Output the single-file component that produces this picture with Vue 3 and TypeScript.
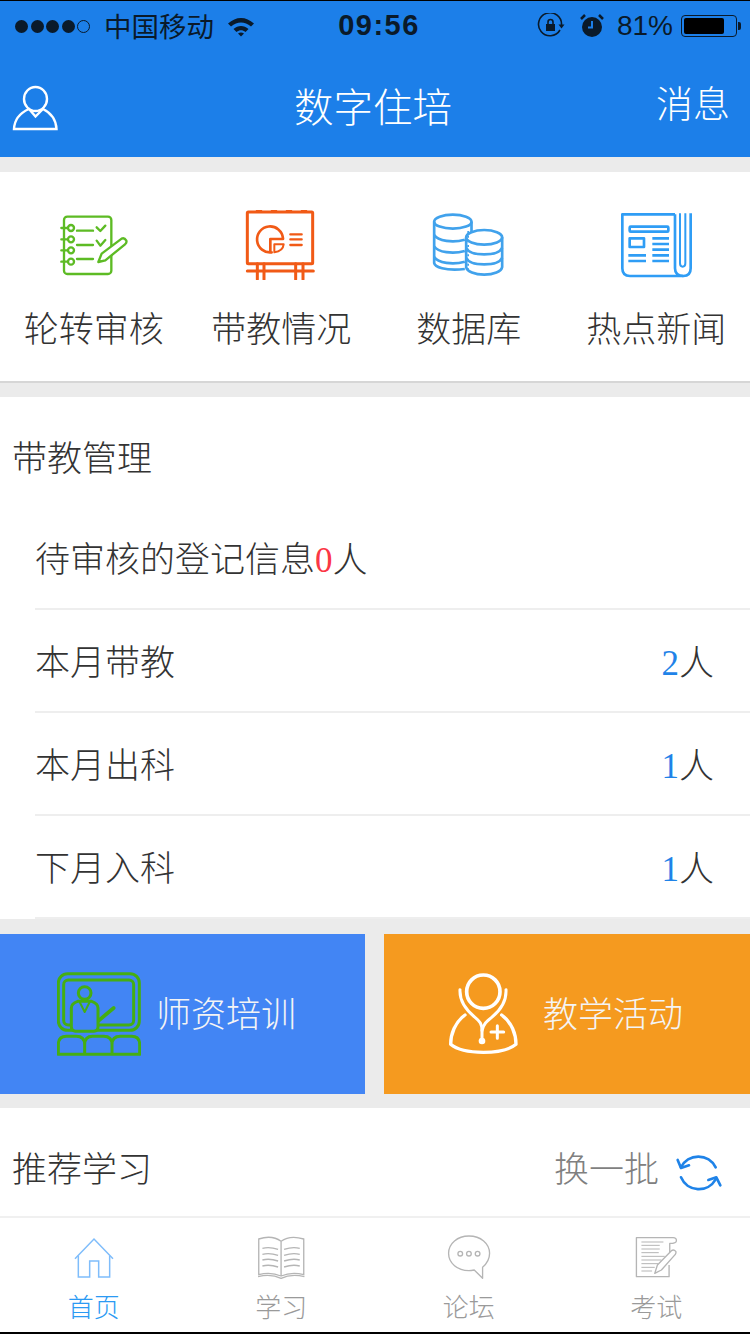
<script setup lang="ts">
interface Row { label: string; count: number }
const rows: Row[] = [
  { label: '本月带教', count: 2 },
  { label: '本月出科', count: 1 },
  { label: '下月入科', count: 1 },
]
</script>

<template>
  <div class="page">
    <header class="header">
      <div class="status">
        <div class="status-left">
          <span class="dots"><i></i><i></i><i></i><i></i><b></b></span>
          <span class="carrier">中国移动</span>
          <svg class="wifi" width="30" height="24" viewBox="0 0 30 24">
            <path d="M2 9.500C10 2 20 2 28 9.500L25 12.500C18.500 7 11.500 7 5 12.500Z" fill="#0a1a2a"/>
            <path d="M7.500 15C12 11 18 11 22.500 15L19.500 18C16.500 15.500 13.500 15.500 10.500 18Z" fill="#0a1a2a"/>
            <path d="M12 19.500C14 18 16 18 18 19.500L15 22.500Z" fill="#0a1a2a"/>
          </svg>
        </div>
        <span class="time">09:56</span>
        <div class="status-right">
          <svg width="28" height="26" viewBox="0 0 28 26" fill="none" stroke="#0a1a2a" stroke-width="1.600">
            <path d="M23 17A11.500 11.500 0 1 1 24.500 12"/>
            <path d="M21.500 11.500H27.500L24.500 15.500Z" fill="#0a1a2a" stroke="none"/>
            <rect x="9" y="11" width="9" height="7" fill="#0a1a2a" stroke="none"/>
            <path d="M11 11V9A2.500 2.500 0 0 1 16 9V11"/>
          </svg>
          <svg class="alarm" width="26" height="26" viewBox="0 0 26 26">
            <circle cx="13" cy="14" r="10" fill="#0a1a2a"/>
            <path d="M13 8V14.500H9" stroke="#1c7fe9" stroke-width="2" fill="none"/>
            <path d="M2 6L6 2M24 6L20 2" stroke="#0a1a2a" stroke-width="2.500"/>
          </svg>
          <span class="battery-text">81%</span>
          <span class="battery"><span class="battery-fill"></span></span>
          <span class="battery-tip"></span>
        </div>
      </div>
      <div class="titlebar">
        <svg class="person" width="46" height="48" viewBox="12 86 46 48" fill="none" stroke="#fff" stroke-width="2.400">
          <ellipse cx="35.500" cy="100" rx="11.500" ry="12"/>
          <path d="M14 130C14.500 120 21 113.500 29 110L35.500 117.500L43 110C50 113.500 56 120 56.500 130Z"/>
        </svg>
        <h1 class="title">数字住培</h1>
        <span class="message">消息</span>
      </div>
    </header>

    <nav class="nav">
      <div class="nav-item">
        <svg class="nav-icon" viewBox="72 45 240 210" fill="none" stroke="#5dbb24" stroke-width="7" stroke-linecap="round" stroke-linejoin="round">
          <rect x="102" y="65" width="142" height="172" rx="10"/>
          <circle cx="123" cy="99" r="9"/><circle cx="123" cy="133" r="9"/><circle cx="123" cy="166" r="9"/><circle cx="123" cy="200" r="9"/>
          <path d="M94 99H112M94 133H112M94 166H112M94 200H112"/>
          <path d="M141 107H189M141 150H189M141 192H189"/>
          <path d="M200 97L211 108L226 92M200 137L211 152L226 135"/>
          <path d="M205 201L215 176L275 131Q283 127 289 137Q291 143 285 148L226 196Z" fill="#fff"/>
        </svg>
        <span class="nav-label">轮转审核</span>
      </div>
      <div class="nav-item">
        <svg class="nav-icon" viewBox="636 45 240 210" fill="none" stroke="#f15a16" stroke-width="9" stroke-linecap="round" stroke-linejoin="round">
          <rect x="655" y="51" width="196" height="155" rx="3"/>
          <path d="M685 47H695M730 47H740M775 47H785M820 47H830"/>
          <path d="M728 172A39 39 0 1 1 762 130L762 132H724V172Z" stroke-width="8"/>
          <path d="M736 148H764Q762 168 736 172Z" stroke-width="6"/>
          <path d="M784 118H818M784 133H818M784 150H818" stroke-width="7"/>
          <path d="M655 228H853M685 206V253M705 206V253M800 206V253M822 206V253"/>
        </svg>
        <span class="nav-label">带教情况</span>
      </div>
      <div class="nav-item">
        <svg class="nav-icon" viewBox="58.500 45 240 210" fill="none" stroke="#41a2ec" stroke-width="8" stroke-linejoin="round">
          <ellipse cx="130" cy="80" rx="56" ry="21"/>
          <path d="M74 80V204C76 216 105 228 166 222M186 80V112"/>
          <path d="M74 120C85 138 130 144 166 134M74 154C85 172 130 178 166 168M74 186C85 204 130 210 166 200"/>
          <ellipse cx="224" cy="127" rx="54" ry="22" fill="#fff"/>
          <path d="M170 127V216C172 230 196 239 224 239C252 239 276 230 278 216V127"/>
          <path d="M170 158C176 172 200 178 224 178C248 178 272 172 278 158M170 188C176 202 200 208 224 208C248 208 272 202 278 188"/>
          <path d="M176 108V224" stroke-dasharray="6 8" stroke-width="5"/>
        </svg>
        <span class="nav-label">数据库</span>
      </div>
      <div class="nav-item">
        <svg class="nav-icon" viewBox="618 45 240 210" fill="none" stroke="#2f9df5" stroke-width="8" stroke-linejoin="round">
          <path d="M795 58H637V220Q637 243 660 243H820"/>
          <path d="M795 58V220Q795 243 820 243Q842 243 842 220V55"/>
          <path d="M810 55V205Q810 215 818 215Q826 215 826 205V55" stroke-width="6"/>
          <rect x="659" y="95" width="116" height="15" rx="3"/>
          <rect x="659" y="130" width="43" height="26"/>
          <path d="M727 130H777M727 147H777M727 164H777M655 181H708M727 181H777M655 198H708M727 198H777"/>
        </svg>
        <span class="nav-label">热点新闻</span>
      </div>
    </nav>

    <section class="manage">
      <h2 class="manage-title">带教管理</h2>
      <div class="row">
        <span>待审核的登记信息<em class="red">0</em>人</span>
      </div>
      <div v-for="row in rows" :key="row.label" class="row between">
        <span>{{ row.label }}</span>
        <span><em class="blue">{{ row.count }}</em>人</span>
      </div>
    </section>

    <section class="tiles">
      <div class="tile tile-blue">
        <svg class="teacher" width="84" height="84" viewBox="50 40 252 252" fill="none" stroke="#45ae12" stroke-width="9" stroke-linejoin="round" stroke-linecap="round">
          <rect x="54" y="45" width="243" height="170" rx="28"/>
          <rect x="70" y="64" width="210" height="135" rx="14"/>
          <path d="M170 190L220 148" stroke-width="11"/>
          <path d="M105 218Q93 216 93 205V148Q93 134 112 128H154Q173 134 173 148V205Q173 216 160 218Z" fill="#4285f4"/>
          <circle cx="133" cy="103" r="19" fill="#4285f4"/>
          <path d="M118 130L133 160L148 130" stroke-width="6"/>
          <path d="M54 287V258Q54 233 78 233H108Q133 233 133 258V287M133 258Q133 233 157 233H190Q215 233 215 258V287M215 258Q215 233 240 233H274Q298 233 298 258V287M54 287H298"/>
        </svg>
        <span class="tile-label">师资培训</span>
      </div>
      <div class="tile tile-orange">
        <svg width="70" height="84" viewBox="54 39 210 252" fill="none" stroke="#fff" stroke-width="9" stroke-linecap="round" stroke-linejoin="round">
          <circle cx="160" cy="98" r="50" stroke-width="11"/>
          <path d="M90 92C88 130 110 155 135 175C150 187 156 195 156 215V238"/>
          <path d="M228 92C230 130 210 155 185 175C170 187 160 195 156 215"/>
          <circle cx="156" cy="246" r="10" fill="#fff" stroke="none"/>
          <path d="M105 168C75 190 62 225 62 256C100 288 220 288 258 256C258 225 245 190 215 168" stroke-width="10"/>
          <path d="M202 200V238M183 219H221" stroke-width="9"/>
        </svg>
        <span class="tile-label">教学活动</span>
      </div>
    </section>

    <section class="recommend">
      <h2 class="recommend-title">推荐学习</h2>
      <div class="refresh">
        <span>换一批</span>
        <svg class="refresh-icon" width="48" height="46" viewBox="408 60 144 138" fill="none" stroke="#1f83e8" stroke-width="8" stroke-linecap="round" stroke-linejoin="round">
          <path d="M426 112A58 58 0 0 1 530 112"/>
          <path d="M416 90L426 114L450 106"/>
          <path d="M426 142A58 58 0 0 0 530 148"/>
          <path d="M544 166L532 142L508 150"/>
        </svg>
      </div>
    </section>

    <footer class="tabbar">
      <div class="tab active">
        <svg class="tab-icon" viewBox="191 66 180 150" fill="none" stroke="#7fbdfb" stroke-width="4.500" stroke-linejoin="miter">
          <path d="M224 146L281 87L338 146"/>
          <path d="M234 137V201H268V153H295V201H328V137"/>
        </svg>
        <span>首页</span>
      </div>
      <div class="tab">
        <svg class="tab-icon" viewBox="753.750 66 180 150" fill="none" stroke="#b5b5b5" stroke-width="4">
          <path d="M844 94C825 80 798 80 777 87V194C800 188 825 190 844 198C863 190 888 188 912 194V87C888 80 863 80 844 94V198"/>
          <path d="M775 200C800 194 825 196 844 205C863 196 888 194 914 200"/>
          <path d="M788 115C803 111 820 113 835 118M788 133C803 129 820 131 835 136M788 150C803 146 820 148 835 153M788 168C803 164 820 166 835 171"/>
          <path d="M853 118C868 113 885 111 900 115M853 136C868 131 885 129 900 133M853 153C868 148 885 146 900 150M853 171C868 166 885 164 900 168"/>
        </svg>
        <span>学习</span>
      </div>
      <div class="tab">
        <svg class="tab-icon" viewBox="191.250 66 180 150" fill="none" stroke="#b5b5b5" stroke-width="4" stroke-linejoin="round">
          <path d="M322 205V172C336 160 343 146 343 130C343 100 316 78 281 78C247 78 220 100 220 130C220 160 247 182 281 182C287 182 292 181 297 180Z"/>
          <circle cx="255" cy="131" r="7"/><circle cx="281" cy="131" r="7"/><circle cx="307" cy="131" r="7"/>
        </svg>
        <span>论坛</span>
      </div>
      <div class="tab">
        <svg class="tab-icon" viewBox="753.750 66 180 150" fill="none" stroke="#b5b5b5" stroke-width="4" stroke-linejoin="round">
          <path d="M883 165V200H785V83H895Q905 83 905 92Q905 100 885 100V135"/>
          <path d="M800 96H866M800 106H855M800 117H855M800 128H852M800 139H870M800 150H860M800 161H850M800 172H840M800 183H832" stroke-width="3"/>
          <path d="M840 190L848 165L890 122Q897 117 903 124Q905 130 901 134L860 180Z" fill="#fff"/>
        </svg>
        <span>考试</span>
      </div>
    </footer>
  </div>
</template>

<style>
html,
body {
  margin: 0;
  background: #ebebeb;
}
</style>

<style scoped>
.page {
  width: 750px;
  height: 1334px;
  overflow: hidden;
  display: flex;
  flex-direction: column;
  background: #ebebeb;
  font-family: "Noto Sans CJK SC", "Liberation Sans", sans-serif;
  font-weight: 300;
  color: #333;
}
.header {
  height: 157px;
  box-sizing: border-box;
  flex: none;
  background: #1c7fe9;
  border-top: 1px solid #000;
}
.status {
  height: 50px;
  display: grid;
  grid-template-columns: 1fr auto 1fr;
  align-items: center;
  color: #0a1a2a;
}
.status-left,
.status-right {
  display: flex;
  align-items: center;
}
.status-left {
  padding-left: 15px;
}
.status-right {
  justify-content: flex-end;
  padding-right: 9px;
}
.dots {
  display: flex;
  gap: 2.500px;
}
.dots i,
.dots b {
  display: block;
  width: 13px;
  height: 13px;
  border-radius: 50%;
  background: #0a1a2a;
  box-sizing: border-box;
}
.dots b {
  background: transparent;
  border: 1px solid #0a1a2a;
}
.carrier {
  margin-left: 14px;
  font-size: 27.500px;
  font-weight: 400;
  line-height: 1;
}
.wifi {
  margin-left: 12px;
}
.time {
  margin: 0 0 2px 8px;
  font-family: "Liberation Sans", sans-serif;
  font-size: 29px;
  font-weight: 700;
  letter-spacing: 1.500px;
}
.alarm {
  margin-left: 14px;
}
.battery-text {
  margin-left: 12px;
  font-family: "Liberation Sans", sans-serif;
  font-size: 28px;
  font-weight: 400;
}
.battery {
  margin-left: 8px;
  width: 56px;
  height: 22px;
  box-sizing: border-box;
  padding: 2px;
  border: 1px solid #0a1a2a;
  border-radius: 4px;
}
.battery-fill {
  display: block;
  width: 40px;
  height: 100%;
  background: #000;
  border-radius: 2px;
}
.battery-tip {
  width: 3px;
  height: 8px;
  margin-left: 1px;
  background: #0a1a2a;
  border-radius: 0 2px 2px 0;
}
.titlebar {
  height: 106px;
  display: grid;
  grid-template-columns: 1fr auto 1fr;
  align-items: center;
  padding: 0 20px 0 12px;
  color: #fff;
}
.person {
  margin-top: 9px;
}
.title {
  margin: 2px 0 0 4px;
  font-size: 39.500px;
  font-weight: 300;
  line-height: 1.2;
}
.message {
  justify-self: end;
  margin-bottom: 4px;
  font-size: 37px;
  line-height: 1.2;
}
.nav {
  flex: none;
  height: 211px;
  margin-top: 15px;
  display: grid;
  grid-template-columns: repeat(4, 1fr);
  background: #fff;
  border-bottom: 2px solid #d6d6d6;
  box-sizing: border-box;
}
.nav-item {
  display: flex;
  flex-direction: column;
  align-items: center;
  padding-top: 38px;
}
.nav-icon {
  width: 80px;
  height: 70px;
  flex: none;
}
.nav-label {
  margin-top: 26px;
  font-size: 35px;
  line-height: 42px;
  white-space: nowrap;
}
.manage {
  flex: none;
  margin-top: 14px;
  height: 522px;
  box-sizing: border-box;
  background: #fff;
}
.manage-title {
  margin: 0;
  height: 110px;
  padding: 38px 0 0 12px;
  box-sizing: border-box;
  font-size: 35px;
  font-weight: 300;
  line-height: 42px;
}
.row {
  height: 103px;
  box-sizing: border-box;
  margin-left: 35px;
  padding: 0 36px 2px 0;
  display: flex;
  align-items: center;
  border-bottom: 2px solid #eeeeee;
  font-size: 35px;
}
.between {
  justify-content: space-between;
}
.row em {
  font-family: "Liberation Serif", serif;
  font-style: normal;
  font-weight: 400;
}
.red {
  color: #fb3745;
}
.blue {
  color: #1f83e8;
}
.tiles {
  flex: none;
  margin-top: 15px;
  height: 160px;
  display: flex;
  justify-content: space-between;
}
.tile {
  width: 366px;
  display: flex;
  align-items: center;
  color: #f4f4f4;
  font-size: 35px;
}
.tile-label {
  margin-bottom: 6px;
}
.tile-blue {
  width: 365px;
  padding-left: 57px;
  gap: 15px;
  box-sizing: border-box;
  background: #4285f4;
}
.tile-orange {
  padding-left: 64px;
  gap: 25px;
  box-sizing: border-box;
  background: #f59a1f;
}
.recommend {
  flex: none;
  margin-top: 14px;
  height: 108px;
  display: flex;
  align-items: center;
  justify-content: space-between;
  padding: 10px 27px 0 12px;
  background: #fff;
  box-sizing: border-box;
}
.recommend-title {
  margin: 0;
  font-size: 35px;
  font-weight: 300;
  line-height: 42px;
}
.refresh {
  display: flex;
  align-items: center;
  gap: 16px;
  color: #808080;
  font-size: 35px;
}
.refresh > span {
  margin: 0 0 2px 1px;
}
.refresh-icon {
  margin-top: 12px;
}
.tabbar {
  flex: none;
  height: 118px;
  box-sizing: border-box;
  display: grid;
  grid-template-columns: repeat(4, 1fr);
  background: #fff;
  border-top: 2px solid #f0f0f0;
  border-bottom: 2px solid #000;
}
.tab {
  display: flex;
  flex-direction: column;
  align-items: center;
  padding-top: 14px;
  color: #9a9a9a;
  font-size: 26px;
  line-height: 36px;
}
.tab.active {
  color: #2b9af3;
}
.tab-icon {
  width: 60px;
  height: 50px;
  flex: none;
  margin-bottom: 6px;
}
</style>
